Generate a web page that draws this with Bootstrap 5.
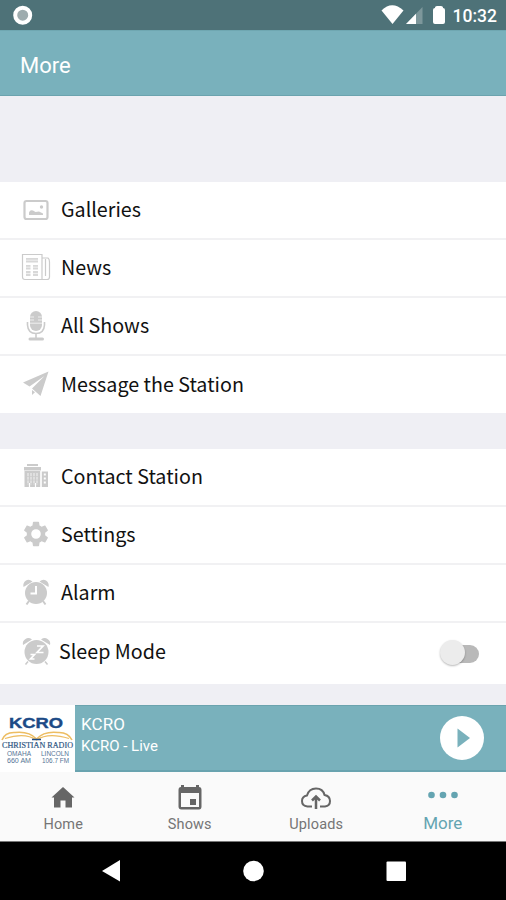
<!DOCTYPE html>
<html lang="en">
<head>
<meta charset="utf-8">
<meta name="viewport" content="width=device-width, initial-scale=1">
<title>More</title>
<link href="https://cdn.jsdelivr.net/npm/bootstrap@5.3.0/dist/css/bootstrap.min.css" rel="stylesheet">
<style>
body{width:506px;height:900px;overflow:hidden;background:#efeff4;font-family:Roboto,"Liberation Sans",sans-serif}
svg{display:block;flex:none}
.status{height:30px;background:#4e7278;font-weight:500;font-size:17.5px;line-height:32px;padding-right:9px}
.status svg{width:66px;height:30px}
.clock{margin-left:6px}
.appbar{height:66px;background:#79b1bc;border-top:1px solid #6fa7b1;border-bottom:1px solid #6ba3ae;font-size:22px;padding:4px 0 0 20px}
.menu{margin-top:86px}
.menu + .menu{margin-top:36px}
.menu .list-group-item{height:58px;padding:0 27px 2px 20px;border:0;border-bottom:2px solid #f1f1f3;color:#111;font-family:"Noto Sans CJK SC","Noto Sans",sans-serif;font-size:19.7px;line-height:30px}
.menu .list-group-item:last-child{height:57px;border-bottom:0;padding-bottom:2px}
.menu .list-group-item.tall{height:61px;padding:0 26px 6px 20px}
.menu svg{width:32px;height:34px;margin-right:9px;fill:#cbcbcb}
.menu .tall svg{margin-right:7px}
.switch{width:40px;height:26px;margin-top:5px;position:relative}
.track{width:34px;height:18px;margin:4px 0 0 5px;background:#b9b9b9}
.knob{position:absolute;left:0;top:0;width:25px;height:25px;background:#ececec;box-shadow:0 1px 2px rgba(0,0,0,.28)}
.player{height:67px;margin-top:21px;background:#79b1bc;border-top:1px solid #6ba3ae;border-bottom:2px solid #69a3af}
.logo{width:75px;height:67px;margin-top:-1px}
.track-info{padding:7px 0 0 6px}
.track-name{font-size:17px;line-height:22px;letter-spacing:.1px}
.track-sub{font-size:15px;line-height:22px}
.play{margin-right:22px}
.tabs{height:70px;background:#fafafa;border-bottom:1px solid #777;color:#757575;font-size:14.5px;letter-spacing:.15px}
.tabs .nav-link{height:69px;padding:9px 0 0;color:inherit;line-height:20px}
.tabs .nav-link.active{color:#64a4b1;font-size:17px;letter-spacing:0;line-height:17px}
.tabs svg{width:34px;height:34px}
.sysbar{height:58px;background:#000}
</style>
<script src="https://cdn.jsdelivr.net/npm/bootstrap@5.3.0/dist/js/bootstrap.bundle.min.js"></script>
</head>
<body class="d-flex flex-column">
<header>
  <div class="status d-flex justify-content-between text-white">
    <svg viewBox="0 0 66 30"><circle cx="22.7" cy="15.2" r="7.5" fill="#9eacae" stroke="#fff" stroke-width="4"/></svg>
    <div class="d-flex">
      <svg viewBox="0 0 66 30"><path d="M.5 10.500Q11 0 22.500 10.500L11.500 24Z" fill="#fff"/><path d="M41.500 7V24H25Z" fill="#7d979b"/><path d="M35 13.700V24H25Z" fill="#fff"/><path d="M54 8V7.500Q54 6 56 6H60Q62 6 62 7.500V8Q64 8 64 10V22Q64 24 62 24H54Q52 24 52 22V10Q52 8 54 8Z" fill="#fff"/></svg>
      <span class="clock">10:32</span>
    </div>
  </div>
  <div class="appbar d-flex align-items-center text-white">More</div>
</header>
<main>
  <div class="menu list-group list-group-flush rounded-0">
    <a class="list-group-item d-flex align-items-center"><svg viewBox="0 0 32 34"><rect x="4.500" y="9" width="23" height="18" rx="2" fill="none" stroke="#cbcbcb" stroke-width="2.200"/><path d="M9 23V20.500Q10 17.500 13 18.500L15.500 20 19 19.500 23 21.500V23Z"/><circle cx="21.500" cy="15" r="1.700"/></svg>Galleries</a>
    <a class="list-group-item d-flex align-items-center"><svg viewBox="0 0 32 34"><g fill="none" stroke="#cbcbcb" stroke-width="1.200"><path d="M22 29.500H5Q2.500 29.500 2.500 27V4.500H22V29.500H27Q29.500 29.500 29.500 27V12Q29.500 9 28 8H22"/><path d="M25.500 9V26"/></g><path d="M6 8H18V12.500H6ZM6 15H10.500V19.500H6ZM13 15H18V19.500H13ZM6 21H10.500V26H6ZM13 21H18V26H13Z" opacity=".75"/><path d="M5 10.200H19M5 17.200H19M5 23.500H19" stroke="#fff" stroke-width=".6"/></svg>News</a>
    <a class="list-group-item d-flex align-items-center"><svg viewBox="0 0 32 34"><rect x="10" y="3" width="12" height="20" rx="6"/><path d="M10 9H14M18 9H22M10 12H14M18 12H22M10 15.200H22" stroke="#fff" stroke-width="1" opacity=".7"/><path d="M7.500 14V17Q8 25.500 16 25.500T24.500 17V14M16 26V31" fill="none" stroke="#cbcbcb" stroke-width="1.600"/><rect x="8.500" y="29.500" width="15.500" height="3" rx="1.500"/></svg>All Shows</a>
    <a class="list-group-item d-flex align-items-center"><svg viewBox="0 0 32 34"><path d="M28.500 4.500L3 15.500 9.500 19.500 24.500 9 12 21.500 20.500 29Z"/><path d="M12 23V28L15 25.200Z"/></svg>Message the Station</a>
  </div>
  <div class="menu list-group list-group-flush rounded-0">
    <a class="list-group-item d-flex align-items-center"><svg viewBox="0 0 32 34"><path d="M7 5H18V7H7ZM4 8H21V11.500H4ZM4.500 12H20.500V28H4.500ZM21.500 12.500H28V28H21.500Z"/><path d="M8 14V25.500M11 14V25.500M14 14V25.500M17 14V25.500" stroke="#fff" stroke-width="1" stroke-dasharray="3 .7" opacity=".8"/><path d="M24.800 14.500V26" stroke="#fff" stroke-width="2" stroke-dasharray="2 2"/><path d="M9.500 24V28M15.500 24V28M21 12V28" stroke="#fff" stroke-width="1.200"/></svg>Contact Station</a>
    <a class="list-group-item d-flex align-items-center"><svg viewBox="0 0 24 24"><path d="M19.430 12.980c.04-.320.070-.640.070-.980s-.030-.660-.070-.980l2.110-1.650c.190-.150.240-.420.120-.640l-2-3.460c-.120-.220-.390-.300-.610-.220l-2.490 1c-.520-.400-1.080-.730-1.690-.980l-.380-2.650C14.460 2.180 14.250 2 14 2h-4c-.250 0-.460.180-.490.420l-.380 2.650c-.610.250-1.170.590-1.690.980l-2.490-1c-.230-.090-.490 0-.610.220l-2 3.460c-.130.220-.070.490.120.640l2.110 1.650c-.040.320-.070.650-.070.980s.030.660.070.980l-2.110 1.650c-.190.150-.240.420-.120.640l2 3.460c.120.220.390.300.610.220l2.490-1c.520.400 1.080.730 1.690.980l.380 2.650c.030.240.240.420.490.420h4c.250 0 .460-.180.490-.420l.380-2.650c.610-.250 1.170-.590 1.690-.980l2.490 1c.230.090.490 0 .610-.220l2-3.460c.120-.220.070-.490-.120-.640l-2.110-1.650zM12 15.900a3.900 3.900 0 1 1 0-7.800 3.900 3.900 0 0 1 0 7.800z" transform="translate(.96 .96) scale(.92)"/></svg>Settings</a>
    <a class="list-group-item d-flex align-items-center"><svg viewBox="0 0 32 34"><circle cx="16" cy="18" r="11"/><path d="M3.500 12Q2.500 8 6 5.500 9 3.500 12.500 6.500ZM28.500 12Q29.500 8 26 5.500 23 3.500 19.500 6.500Z"/><path d="M9 26L6.500 29.500M23 26L25.500 29.500" stroke="#cbcbcb" stroke-width="2"/><path d="M16 11V18.500H10.500" fill="none" stroke="#fff" stroke-width="2"/></svg>Alarm</a>
    <div class="list-group-item tall d-flex align-items-center"><svg viewBox="0 0 32 34"><circle cx="16.500" cy="18" r="12"/><path d="M3 11Q2 7 5.500 5 8.500 3 12 5.500ZM30 11Q31 7 27.500 5 24.500 3 21 5.500Z"/><path d="M8 27.500L5.500 30.500M25 27.500L27.500 30.500" stroke="#cbcbcb" stroke-width="1.500"/><path d="M17 12H23L17 18.500H23.500M10.500 20.500H14.500L10.500 25H14.500" fill="none" stroke="#fff" stroke-width="1.700"/></svg>Sleep Mode
      <div class="switch ms-auto"><div class="track rounded-pill d-inline-block"></div><div class="knob rounded-circle"></div></div></div>
  </div>
</main>
<section class="player d-flex text-white">
  <svg class="logo" viewBox="0 0 75 67"><rect width="75" height="67" fill="#fff"/>
    <text x="9" y="22.500" font-family="Liberation Sans" font-weight="700" font-size="15.500" fill="#1c4a86" stroke="#1c4a86" stroke-width=".4" textLength="54" lengthAdjust="spacingAndGlyphs">KCRO</text>
    <path d="M2 35Q5 27 15 27.500 29 26 36.500 34 44 26 58 27.500 68 27 72 35" fill="none" stroke="#edbd62" stroke-width="1.600"/><path d="M5 33.500Q25 27 36.500 35 48 27 69 33.500" fill="none" stroke="#edbd62" stroke-width="1.200"/><path d="M32 34.500H41" stroke="#1c4a86" stroke-width="1.500"/>
    <text x="2" y="42.500" font-family="Liberation Serif" font-size="8.200" fill="#2f5683" stroke="#2f5683" stroke-width=".2" textLength="71" lengthAdjust="spacingAndGlyphs">CHRISTIAN RADIO</text>
    <g font-family="Liberation Sans" font-size="6.500" fill="#557596"><text x="7" y="51" textLength="24" lengthAdjust="spacingAndGlyphs">OMAHA</text><text x="7" y="57.500" textLength="24" lengthAdjust="spacingAndGlyphs">660 AM</text><text x="41" y="51" textLength="28" lengthAdjust="spacingAndGlyphs">LINCOLN</text><text x="42" y="57.500" textLength="27" lengthAdjust="spacingAndGlyphs">106.7 FM</text></g></svg>
  <div class="track-info flex-grow-1"><div class="track-name">KCRO</div><div class="track-sub">KCRO - Live</div></div>
  <svg class="play align-self-center" width="44" height="44" viewBox="0 0 44 44"><circle cx="22" cy="22" r="22" fill="#fff"/><path d="M17.500 12.500L30 22 17.500 31.500Z" fill="#79b1bc"/></svg>
</section>
<nav class="tabs nav nav-justified flex-nowrap">
  <a class="nav-link d-flex flex-column align-items-center"><svg viewBox="0 0 34 34"><path d="M17 6L28.500 16.500H26V26.500H19.500V19.500H14.500V26.500H8V16.500H5.500Z" fill="#666"/></svg>Home</a>
  <a class="nav-link d-flex flex-column align-items-center"><svg viewBox="0 0 34 34"><path d="M8 4H11V6H23V4H26V6Q28.500 6 28.500 9V25.500Q28.500 28.500 26 28.500H8.500Q5.500 28.500 5.500 25.500V9Q5.500 6 8 6ZM8 12V26H26V12ZM17 18H23V24H17Z" fill="#666" fill-rule="evenodd"/></svg>Shows</a>
  <a class="nav-link d-flex flex-column align-items-center"><svg viewBox="0 0 34 34"><path d="M13 25.500H8.500Q3 25 3 20 3 15.500 8 14.500 10 7.500 17 7.500T25.500 14Q31 15 31 20 31 25 26 25.500H21" fill="none" stroke="#666" stroke-width="2"/><path d="M17 28V16.500M13 19.500L17 15.500 21 19.500" fill="none" stroke="#666" stroke-width="2.500"/></svg>Uploads</a>
  <a class="nav-link active d-flex flex-column align-items-center"><svg viewBox="0 0 34 34"><g fill="#64a4b1"><circle cx="5.500" cy="14" r="3.300"/><circle cx="17" cy="14" r="3.300"/><circle cx="28.500" cy="14" r="3.300"/></g></svg>More</a>
</nav>
<footer class="sysbar">
  <svg width="506" height="58" viewBox="0 0 506 58" fill="#fff"><path d="M120 18V39.500L102 29Z"/><circle cx="253.500" cy="29" r="10.300"/><rect x="386.500" y="19.500" width="19.500" height="19.500" rx="1"/></svg>
</footer>
</body>
</html>
